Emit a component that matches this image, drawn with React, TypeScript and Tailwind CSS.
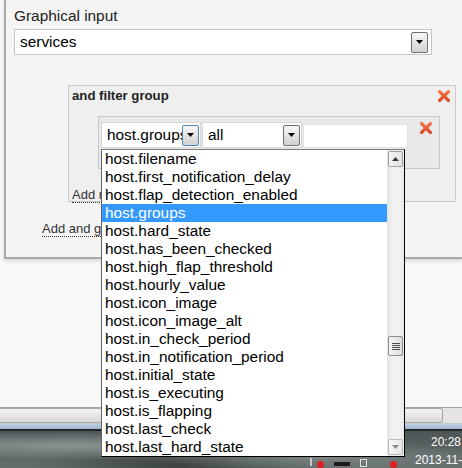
import React from "react";

const items = [
  "host.filename",
  "host.first_notification_delay",
  "host.flap_detection_enabled",
  "host.groups",
  "host.hard_state",
  "host.has_been_checked",
  "host.high_flap_threshold",
  "host.hourly_value",
  "host.icon_image",
  "host.icon_image_alt",
  "host.in_check_period",
  "host.in_notification_period",
  "host.initial_state",
  "host.is_executing",
  "host.is_flapping",
  "host.last_check",
  "host.last_hard_state",
];

function RedX() {
  return (
    <svg width="14" height="14" viewBox="0 0 14 14" className="shrink-0">
      <defs>
        <linearGradient id="rxg" x1="0" y1="0" x2="0" y2="14" gradientUnits="userSpaceOnUse">
          <stop offset="0" stopColor="#f7804f" />
          <stop offset="1" stopColor="#d6401b" />
        </linearGradient>
      </defs>
      <path d="M2.6 2.6 L11.4 11.4 M11.4 2.6 L2.6 11.4" stroke="url(#rxg)" strokeWidth="3.4" strokeLinecap="round" />
    </svg>
  );
}

function Tri({ color = "#000", up = false }: { color?: string; up?: boolean }) {
  return (
    <svg width="7" height="4" viewBox="0 0 7 4">
      <polygon points={up ? "0,4 7,4 3.5,0" : "0,0 7,0 3.5,4"} fill={color} />
    </svg>
  );
}

function ComboBtn({ focus = false }: { focus?: boolean }) {
  return (
    <div
      className={
        "shrink-0 w-[17px] h-[21px] rounded-[2px] border flex items-center justify-center bg-[linear-gradient(#f7f7f7,#e4e4e4_50%,#d2d2d2)] " +
        (focus ? "border-[#4f86b8]" : "border-[#6f6f6f]")
      }
    >
      <Tri />
    </div>
  );
}

export default function App() {
  return (
    <div className="relative w-[462px] h-[468px] overflow-hidden bg-[#f8f8f8] flex flex-col font-['Liberation_Sans',Arial,sans-serif] text-[#1a1a1a]">
      {/* main panel */}
      <div className="ml-[4px] h-[259px] shrink-0 border-l-2 border-b-2 border-[#a9a9a9] bg-[#f4f4f4] shadow-[0_2px_4px_rgba(0,0,0,0.13)] pl-[8px] pt-[7px]">
        <div className="text-[15.4px] leading-[18px] text-[#222]">Graphical input</div>
        <div className="mt-[4px] w-[418px] h-[26px] border border-[#c6c6c6] bg-white flex items-center pl-[5px] pr-[3px]">
          <span className="flex-1 text-[15.4px] leading-[18px] text-black">services</span>
          <ComboBtn />
        </div>

        {/* and filter group */}
        <div className="ml-[54px] mt-[30px] w-[388px] h-[117px] border border-[#cacaca] bg-[#efefef]">
          <div className="h-[20px] flex items-center justify-between pl-[3px] pr-[4px]">
            <span className="text-[13.2px] leading-[16px] font-bold text-[#222]">and filter group</span>
            <RedX />
          </div>
          <div className="ml-[29px] mt-[10px] w-[342px] h-[53px] border border-[#c8c8c8] bg-[#e9e9e9] pt-[5px] pl-[2px] flex items-start">
            <div className="w-[100px] h-[26px] border border-[#d6d6d6] bg-white flex items-center pl-[5px] pr-[1px]">
              <span className="flex-1 min-w-0 overflow-hidden whitespace-nowrap text-[15.4px] leading-[18px] text-black">host.groups</span>
              <ComboBtn focus />
            </div>
            <div className="ml-[1px] w-[100px] h-[26px] border border-[#d6d6d6] bg-white flex items-center pl-[5px] pr-[1px]">
              <span className="flex-1 min-w-0 overflow-hidden whitespace-nowrap text-[15.4px] leading-[18px] text-black">all</span>
              <ComboBtn />
            </div>
            <div className="ml-[1px] mt-[2px] w-[105px] h-[24px] border border-[#e2e2e2] bg-white" />
            <div className="ml-[11px] mt-[-1px]">
              <RedX />
            </div>
          </div>
          <div className="pl-[3px] mt-[13px]">
            <span className="inline-block text-[13px] leading-[15px] text-[#333] border-b border-dotted border-[#333]">Add rule</span>
          </div>
        </div>

        <div className="ml-[28px] mt-[14px]">
          <span className="inline-block text-[13px] leading-[15px] text-[#333] border-b border-dotted border-[#333]">Add and group</span>
        </div>
      </div>

      <div className="flex-1" />

      {/* horizontal scrollbar */}
      <div className="h-[16px] shrink-0 border-t border-[#a4a4a4] bg-[#e4e4e4] flex">
        <div className="w-[443px] h-full rounded-r-[3px] border border-l-0 border-[#a8a8a8] bg-[linear-gradient(#f3f3f3,#e6e6e6_50%,#d9d9d9)]" />
      </div>

      {/* taskbar */}
      <div className="relative h-[45px] shrink-0 flex flex-col">
        <div className="h-[1px] bg-[#c4ccd4]" />
        <div className="h-[5px] bg-[linear-gradient(#c0d0e2,#9eb5ce)]" />
        <div className="h-[2px] bg-[#22282c]" />
        <div className="flex-1 bg-[radial-gradient(ellipse_at_15%_40%,#8a9292_0%,transparent_45%),radial-gradient(ellipse_at_70%_70%,#7c8484_0%,transparent_40%),radial-gradient(ellipse_at_40%_90%,#3a4040_0%,transparent_40%),linear-gradient(#4d5556,#666e6e)]" />
        {/* tray icons */}
        <div className="absolute left-[310px] top-[35px] w-[2px] h-[8px] bg-[#c8c8c8]" />
        <div className="absolute left-[317px] top-[38px] w-[7px] h-[7px] rounded-full bg-[#e02020]" />
        <div className="absolute left-[334px] top-[39px] w-[16px] h-[4px] bg-[#1c1c1c]" />
        <div className="absolute left-[360px] top-[36px] w-[7px] h-[8px] border border-[#e0e0e0]" />
        <div className="absolute left-[390px] top-[38px] w-[7px] h-[7px] rounded-full bg-[#e02020]" />
        <div className="absolute left-[431px] top-[12px] text-[12px] leading-[15px] text-white">20:28</div>
        <div className="absolute left-[415px] top-[30px] text-[12px] leading-[15px] text-white whitespace-nowrap">2013-11-06</div>
      </div>

      {/* dropdown list overlay */}
      <div className="absolute left-[101px] top-[149px] w-[304px] h-[308px] z-10 border border-black border-l-[#646464] border-t-[#7c7c7c] bg-white flex">
        <div className="w-[285px] flex flex-col">
          {items.map((it) => (
            <div
              key={it}
              className={
                "h-[18px] pl-[3px] flex items-center text-[15.4px] leading-[18px] whitespace-nowrap " +
                (it === "host.groups" ? "bg-[#3399ff] text-white" : "text-black")
              }
            >
              {it}
            </div>
          ))}
        </div>
        <div className="relative w-[17px] h-full bg-[linear-gradient(to_right,#e3e3e3,#f1f1f1_35%,#f1f1f1_70%,#e9e9e9)] flex flex-col justify-between p-[1px]">
          <div className="w-[15px] h-[16px] rounded-[2px] border border-[#a2a2a2] bg-[linear-gradient(to_right,#f5f5f5,#e2e2e2)] flex items-center justify-center">
            <Tri up color="#3a3a3a" />
          </div>
          <div className="w-[15px] h-[16px] rounded-[2px] border border-[#bcbcbc] bg-[linear-gradient(to_right,#f7f7f7,#e6e6e6)] flex items-center justify-center">
            <Tri color="#8a8a8a" />
          </div>
          <div className="absolute left-[1px] top-[186px] w-[15px] h-[20px] rounded-[2px] border border-[#8f8f8f] bg-[linear-gradient(to_right,#f4f4f4,#dddddd)] flex flex-col items-center justify-center gap-[1px]">
            <div className="w-[8px] h-[1px] bg-[#505050]" />
            <div className="w-[8px] h-[1px] bg-[#505050]" />
            <div className="w-[8px] h-[1px] bg-[#505050]" />
            <div className="w-[8px] h-[1px] bg-[#505050]" />
          </div>
        </div>
      </div>
    </div>
  );
}
